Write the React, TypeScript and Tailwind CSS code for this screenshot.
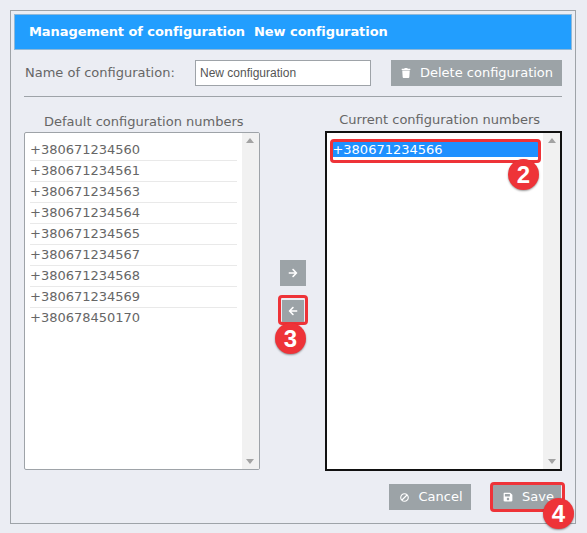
import React from "react";
import { FaArrowLeft, FaArrowRight, FaBan, FaSave, FaTrash } from "react-icons/fa";

const defaultNumbers = [
  "+380671234560",
  "+380671234561",
  "+380671234563",
  "+380671234564",
  "+380671234565",
  "+380671234567",
  "+380671234568",
  "+380671234569",
  "+380678450170",
];

function Badge({ n, className }: { n: number; className: string }) {
  return (
    <div
      className={
        "absolute flex h-[31px] w-[31px] items-center justify-center rounded-full bg-[#ee3338] font-['Liberation_Sans',sans-serif] text-[24px] font-bold text-white shadow-[0_1px_2px_rgba(0,0,0,0.4)] " +
        className
      }
    >
      {n}
    </div>
  );
}

function Scrollbar() {
  return (
    <div className="flex w-[17px] shrink-0 flex-col items-center justify-between bg-[#f1f1f1] py-[5px]">
      <div className="h-0 w-0 border-x-[4px] border-b-[5px] border-x-transparent border-b-[#a3a3a3]" />
      <div className="h-0 w-0 border-x-[4px] border-t-[5px] border-x-transparent border-t-[#a3a3a3]" />
    </div>
  );
}

export default function App() {
  return (
    <div className="h-[533px] w-[587px] overflow-hidden bg-[#ebedf3] p-[10px] font-['DejaVu_Sans',sans-serif] text-[#666]">
      <div className="relative h-[514px] w-[566px] border border-[#9ea3a8] p-[3px]">
        {/* Header */}
        <div className="flex h-[36px] items-center border border-[#8fb8d8] bg-[#229efe] pl-[14px] text-[13px] font-bold tracking-[-0.07px] text-white">
          <span>Management of configuration</span>
          <span className="ml-[9px]">New configuration</span>
        </div>

        {/* Name row */}
        <div className="mx-[10px] mt-[10px] flex h-[26px] items-center">
          <span className="w-[171px] pl-px text-[13px]">Name of configuration:</span>
          <input
            readOnly
            value="New configuration"
            className="h-[26px] w-[176px] border border-[#9ea3a8] bg-white px-[4px] font-['Liberation_Sans',sans-serif] text-[12px] text-[#555]"
          />
          <button className="ml-[20px] flex h-[26px] w-[171px] items-center justify-center gap-[9px] bg-[#9ca3a7] pl-px text-[13px] text-white">
            <FaTrash size={10} />
            Delete configuration
          </button>
        </div>
        <div className="mx-[10px] mt-[10px] h-px bg-[#9ea3a8]" />

        {/* Lists */}
        <div className="mx-[10px] mt-[13px] flex">
          <div className="w-[236px]">
            <div className="h-[22px] pl-[4px] pt-[2px] text-center text-[13px] leading-[20px]">
              Default configuration numbers
            </div>
            <div className="flex h-[338px] overflow-hidden rounded-[2px] border border-[#9ea3a8] bg-white">
              <div className="flex-1 pt-[7px] pl-[5px] pr-[5px] text-[13px] leading-[20px]">
                {defaultNumbers.map((num) => (
                  <div key={num} className="h-[21px] border-b border-[#e9e9e9] last:border-0">
                    {num}
                  </div>
                ))}
              </div>
              <Scrollbar />
            </div>
          </div>

          <div className="flex w-[66px] flex-col items-center pt-[128px]">
            <button className="mt-[22px] flex h-[26px] w-[26px] items-center justify-center bg-[#9ca3a7] text-white">
              <FaArrowRight size={10} />
            </button>
            <button className="mt-[14px] flex h-[22px] w-[22px] items-center justify-center bg-[#9ca3a7] text-white">
              <FaArrowLeft size={10} />
            </button>
          </div>

          <div className="w-[237px]">
            <div className="h-[21px] pt-px pr-[8px] text-center text-[13px] leading-[18px]">
              Current configuration numbers
            </div>
            <div className="flex h-[340px] overflow-hidden border-2 border-[#111] bg-white">
              <div className="flex-1 pt-[9px] pl-[5px] pr-[4px] text-[13px] leading-[15px] text-white">
                <div className="h-[15px] bg-[#1e90ff]">+380671234566</div>
              </div>
              <Scrollbar />
            </div>
          </div>
        </div>

        {/* Footer buttons */}
        <div className="mt-[13px] mr-[11px] flex justify-end gap-[22px]">
          <button className="flex h-[26px] w-[82px] items-center justify-center gap-[9px] bg-[#9ca3a7] pl-[3px] text-[13px] text-white">
            <FaBan size={9} className="-scale-x-100" />
            Cancel
          </button>
          <button className="flex h-[26px] w-[68px] items-center justify-center gap-[9px] bg-[#9ca3a7] pl-[3px] text-[13px] text-white">
            <FaSave size={10} />
            Save
          </button>
        </div>

        {/* Callouts */}
        <div className="pointer-events-none absolute left-[319px] top-[128px] h-[24px] w-[211px] rounded-[4px] border-[3px] border-[#ee3338]" />
        <Badge n={2} className="left-[497px] top-[148px]" />
        <div className="pointer-events-none absolute left-[267px] top-[284px] h-[30px] w-[30px] rounded-[4px] border-[3px] border-[#ee3338]" />
        <Badge n={3} className="left-[264px] top-[312px]" />
        <div className="pointer-events-none absolute left-[479px] top-[471px] h-[30px] w-[75px] rounded-[4px] border-[3px] border-[#ee3338]" />
        <Badge n={4} className="left-[532px] top-[487px]" />
      </div>
    </div>
  );
}
